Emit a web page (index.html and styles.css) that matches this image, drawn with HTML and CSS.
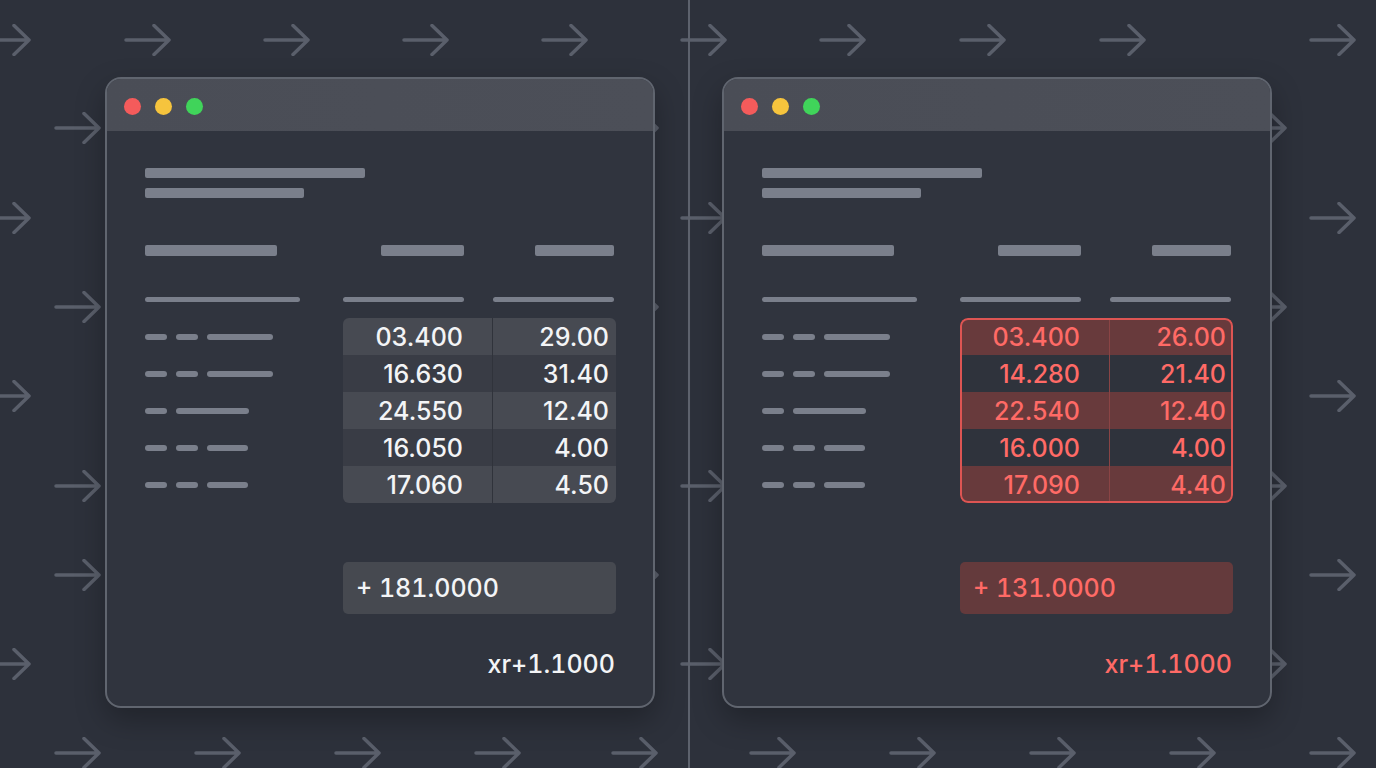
FILE: index.html
```html
<!DOCTYPE html>
<html lang="en">
<head>
<meta charset="utf-8">
<title>Comparison</title>
<link rel="stylesheet" href="styles.css">
</head>
<body>
<svg class="arrows" width="1376" height="768" viewBox="0 0 1376 768" aria-hidden="true">
  <defs>
    <symbol id="arr" viewBox="0 0 48 32">
      <path d="M2 16 H45 M30 1.5 L45 16 L30 30.5" fill="none" stroke="#5a5f6b" stroke-width="3.5" stroke-linecap="round" stroke-linejoin="round"/>
    </symbol>
  </defs>
  <use href="#arr" x="-16" y="24" width="48" height="32"/>
  <use href="#arr" x="124" y="24" width="48" height="32"/>
  <use href="#arr" x="263" y="24" width="48" height="32"/>
  <use href="#arr" x="402" y="24" width="48" height="32"/>
  <use href="#arr" x="541" y="24" width="48" height="32"/>
  <use href="#arr" x="680" y="24" width="48" height="32"/>
  <use href="#arr" x="819" y="24" width="48" height="32"/>
  <use href="#arr" x="959" y="24" width="48" height="32"/>
  <use href="#arr" x="1099" y="24" width="48" height="32"/>
  <use href="#arr" x="1309" y="24" width="48" height="32"/>

  <use href="#arr" x="54" y="112" width="48" height="32"/>
  <use href="#arr" x="612" y="112" width="48" height="32"/>
  <use href="#arr" x="1240" y="112" width="48" height="32"/>

  <use href="#arr" x="-16" y="202" width="48" height="32"/>
  <use href="#arr" x="680" y="202" width="48" height="32"/>
  <use href="#arr" x="1309" y="202" width="48" height="32"/>

  <use href="#arr" x="54" y="291" width="48" height="32"/>
  <use href="#arr" x="612" y="291" width="48" height="32"/>
  <use href="#arr" x="1240" y="291" width="48" height="32"/>

  <use href="#arr" x="-16" y="380" width="48" height="32"/>
  <use href="#arr" x="1309" y="380" width="48" height="32"/>

  <use href="#arr" x="54" y="470" width="48" height="32"/>
  <use href="#arr" x="680" y="470" width="48" height="32"/>
  <use href="#arr" x="1240" y="470" width="48" height="32"/>

  <use href="#arr" x="54" y="559" width="48" height="32"/>
  <use href="#arr" x="612" y="559" width="48" height="32"/>
  <use href="#arr" x="1309" y="559" width="48" height="32"/>

  <use href="#arr" x="-16" y="648" width="48" height="32"/>
  <use href="#arr" x="680" y="648" width="48" height="32"/>
  <use href="#arr" x="1240" y="648" width="48" height="32"/>

  <use href="#arr" x="54" y="737" width="48" height="32"/>
  <use href="#arr" x="194" y="737" width="48" height="32"/>
  <use href="#arr" x="334" y="737" width="48" height="32"/>
  <use href="#arr" x="474" y="737" width="48" height="32"/>
  <use href="#arr" x="611" y="737" width="48" height="32"/>
  <use href="#arr" x="749" y="737" width="48" height="32"/>
  <use href="#arr" x="889" y="737" width="48" height="32"/>
  <use href="#arr" x="1029" y="737" width="48" height="32"/>
  <use href="#arr" x="1169" y="737" width="48" height="32"/>
  <use href="#arr" x="1309" y="737" width="48" height="32"/>
</svg>

<main class="stage">
  <section class="window">
    <div class="titlebar">
      <span class="dot red"></span><span class="dot yellow"></span><span class="dot green"></span>
    </div>
    <div class="content">
      <div class="bar title1"></div>
      <div class="bar title2"></div>

      <div class="cols head-row">
        <div class="bar hb1"></div>
        <div class="bar hb2"></div>
        <div class="bar hb3"></div>
      </div>
      <div class="cols thin-row">
        <div class="line tl1"></div>
        <div class="line tl2"></div>
        <div class="line tl3"></div>
      </div>

      <div class="cols main-row">
        <div class="labels">
          <div class="lab"><i class="p s"></i><i class="p s"></i><i class="p l"></i></div>
          <div class="lab"><i class="p s"></i><i class="p s"></i><i class="p l"></i></div>
          <div class="lab"><i class="p s"></i><i class="p xl"></i></div>
          <div class="lab"><i class="p s"></i><i class="p s"></i><i class="p m"></i></div>
          <div class="lab"><i class="p s"></i><i class="p s"></i><i class="p m"></i></div>
        </div>
        <div class="table">
          <div class="row hi"><span>03.400</span><span>29.00</span></div>
          <div class="row lo"><span>16.630</span><span>31.40</span></div>
          <div class="row hi"><span>24.550</span><span>12.40</span></div>
          <div class="row lo"><span>16.050</span><span>4.00</span></div>
          <div class="row hi"><span>17.060</span><span>4.50</span></div>
        </div>
      </div>

      <div class="cols sum-row">
        <div class="total">+ 181.0000</div>
      </div>
      <div class="foot">xr+1.1000</div>
    </div>
  </section>

  <div class="divider"></div>

  <section class="window bad">
    <div class="titlebar">
      <span class="dot red"></span><span class="dot yellow"></span><span class="dot green"></span>
    </div>
    <div class="content">
      <div class="bar title1"></div>
      <div class="bar title2"></div>

      <div class="cols head-row">
        <div class="bar hb1"></div>
        <div class="bar hb2"></div>
        <div class="bar hb3"></div>
      </div>
      <div class="cols thin-row">
        <div class="line tl1"></div>
        <div class="line tl2"></div>
        <div class="line tl3"></div>
      </div>

      <div class="cols main-row">
        <div class="labels">
          <div class="lab"><i class="p s"></i><i class="p s"></i><i class="p l"></i></div>
          <div class="lab"><i class="p s"></i><i class="p s"></i><i class="p l"></i></div>
          <div class="lab"><i class="p s"></i><i class="p xl"></i></div>
          <div class="lab"><i class="p s"></i><i class="p s"></i><i class="p m"></i></div>
          <div class="lab"><i class="p s"></i><i class="p s"></i><i class="p m"></i></div>
        </div>
        <div class="table">
          <div class="row hi"><span>03.400</span><span>26.00</span></div>
          <div class="row lo"><span>14.280</span><span>21.40</span></div>
          <div class="row hi"><span>22.540</span><span>12.40</span></div>
          <div class="row lo"><span>16.000</span><span>4.00</span></div>
          <div class="row hi"><span>17.090</span><span>4.40</span></div>
        </div>
      </div>

      <div class="cols sum-row">
        <div class="total">+ 131.0000</div>
      </div>
      <div class="foot">xr+1.1000</div>
    </div>
  </section>
</main>
</body>
</html>
```

FILE: styles.css
```css
* { box-sizing: border-box; }

html, body {
  margin: 0;
  padding: 0;
  width: 1376px;
  height: 768px;
  overflow: hidden;
  background: #2d313b;
  font-family: "Inter", "Liberation Sans", sans-serif;
}

.arrows {
  position: absolute;
  left: 0;
  top: 0;
  z-index: 0;
}

.stage {
  position: relative;
  z-index: 1;
  display: flex;
  align-items: flex-start;
  height: 768px;
  padding-left: 105px;
}

.divider {
  align-self: stretch;
  width: 2px;
  margin: 0 32px 0 33px;
  background: #5d626d;
}

.window {
  width: 550px;
  height: 631px;
  margin-top: 77px;
  border: 2px solid #60656f;
  border-radius: 16px;
  background: #30343e;
  overflow: hidden;
  display: flex;
  flex-direction: column;
  box-shadow: 0 12px 30px rgba(0, 0, 0, 0.28);
}

.titlebar {
  height: 52px;
  flex: none;
  background: linear-gradient(90deg, #4a4d56, #4c4f58);
  display: flex;
  align-items: center;
  gap: 14px;
  padding-left: 17px;
  padding-top: 2px;
}

.dot {
  width: 17px;
  height: 17px;
  border-radius: 50%;
}
.dot.red { background: #f45b5b; }
.dot.yellow { background: #f6c43d; }
.dot.green { background: #40d45a; }

.content {
  padding: 37px 0 0 38px;
  width: 509px;
}

.bar {
  height: 10px;
  border-radius: 2px;
  background: #7a7f8b;
}
.title1 { width: 220px; }
.title2 { width: 159px; margin-top: 10px; }

.cols {
  display: grid;
  grid-template-columns: 198px 149px 124px;
}

.head-row { margin-top: 47px; }
.head-row .bar { height: 11px; }
.hb1 { width: 132px; }
.hb2 { width: 83px; justify-self: end; margin-right: 28px; }
.hb3 { width: 79px; justify-self: end; margin-right: 2px; }

.thin-row { margin-top: 41px; }
.line {
  height: 5px;
  border-radius: 3px;
  background: #7a7f8b;
}
.tl1 { width: 155px; }
.tl2 { width: 121px; }
.tl3 { width: 121px; margin-left: 1px; }

.main-row { margin-top: 16px; }

.labels {
  display: flex;
  flex-direction: column;
}
.lab {
  height: 37px;
  display: flex;
  align-items: center;
  gap: 9px;
}
.p {
  display: block;
  height: 6px;
  border-radius: 3px;
  background: #7a7f8b;
}
.p.s { width: 22px; }
.p.l { width: 66px; }
.p.xl { width: 73px; }
.p.m { width: 41px; }

.table {
  position: relative;
  grid-column: 2 / 4;
  border-radius: 6px;
  overflow: hidden;
}

.row {
  display: grid;
  grid-template-columns: 149px 124px;
  height: 37px;
  font-size: 25px;
  font-weight: 550;
  color: #f3f4f6;
}
.row span {
  display: flex;
  align-items: center;
  justify-content: flex-end;
}
.row span:first-child { padding-right: 29px; }
.row span:last-child {
  padding-right: 7px;
  border-left: 1px solid #30333b;
}
.row.hi { background: #474a52; }
.row.lo { background: #393c45; }

.sum-row { margin-top: 59px; }
.total {
  grid-column: 2 / 4;
  height: 52px;
  border-radius: 5px;
  background: #464950;
  color: #f3f4f6;
  font-size: 25px;
  font-weight: 550;
  font-feature-settings: "tnum" 1;
  display: flex;
  align-items: center;
  padding-left: 13px;
}

.foot {
  width: 471px;
  margin-top: 35px;
  text-align: right;
  padding-right: 1px;
  font-size: 25px;
  font-weight: 550;
  font-feature-settings: "tnum" 1;
  line-height: 30px;
  color: #f3f4f6;
}

/* Error (right) window */
.bad .table::after {
  content: "";
  position: absolute;
  inset: 0;
  border: 2px solid #dd5553;
  border-radius: 8px;
  pointer-events: none;
}
.bad .table { border-radius: 8px; }
.bad .row { color: #ff6a66; }
.bad .row.hi { background: #683a3c; }
.bad .row.lo { background: #2f333c; }
.bad .row span:last-child { border-left-color: #8a4445; }
.bad .total { background: #643a3c; color: #ff6a66; }
.bad .foot { color: #ff6a66; }
```
